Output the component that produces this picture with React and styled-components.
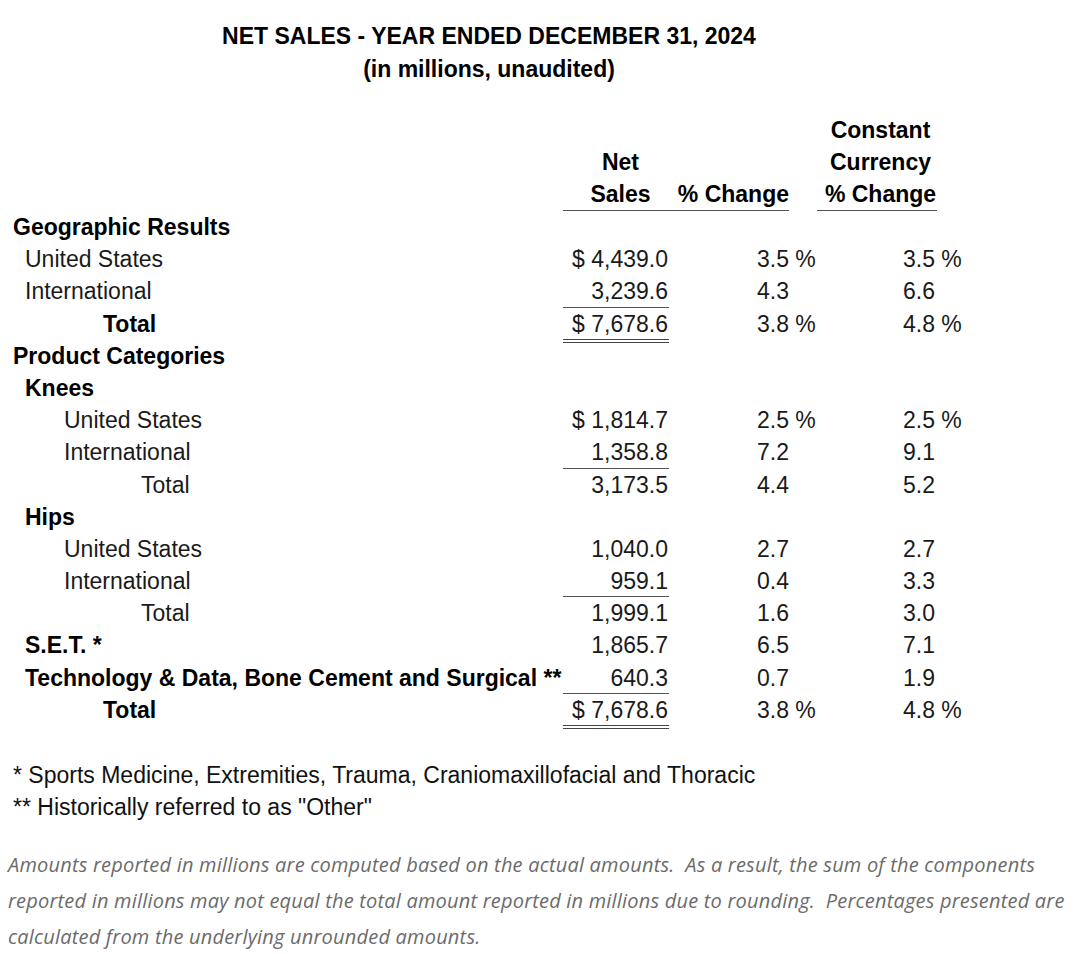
import styled, { createGlobalStyle } from "styled-components";

const GlobalStyle = createGlobalStyle`
  body {
    margin: 0;
    background: #fff;
    font-family: "Liberation Sans", Arial, sans-serif;
    color: #111;
  }
`;

// rows of the net sales table
const rows = [
  { label: "Geographic Results", indent: 0, bold: true },
  { label: "United States", indent: 12, net: "$ 4,439.0", pct: "3.5 %", cc: "3.5 %" },
  { label: "International", indent: 12, net: "3,239.6", pct: "4.3", cc: "6.6", rule: "single" },
  { label: "Total", indent: 90, bold: true, net: "$ 7,678.6", pct: "3.8 %", cc: "4.8 %", rule: "double" },
  { label: "Product Categories", indent: 0, bold: true },
  { label: "Knees", indent: 12, bold: true },
  { label: "United States", indent: 51, net: "$ 1,814.7", pct: "2.5 %", cc: "2.5 %" },
  { label: "International", indent: 51, net: "1,358.8", pct: "7.2", cc: "9.1", rule: "single" },
  { label: "Total", indent: 128, net: "3,173.5", pct: "4.4", cc: "5.2" },
  { label: "Hips", indent: 12, bold: true },
  { label: "United States", indent: 51, net: "1,040.0", pct: "2.7", cc: "2.7" },
  { label: "International", indent: 51, net: "959.1", pct: "0.4", cc: "3.3", rule: "single" },
  { label: "Total", indent: 128, net: "1,999.1", pct: "1.6", cc: "3.0" },
  { label: "S.E.T. *", indent: 12, bold: true, net: "1,865.7", pct: "6.5", cc: "7.1" },
  { label: "Technology & Data, Bone Cement and Surgical **", indent: 12, bold: true, net: "640.3", pct: "0.7", cc: "1.9", rule: "single" },
  { label: "Total", indent: 90, bold: true, net: "$ 7,678.6", pct: "3.8 %", cc: "4.8 %", rule: "double" },
];

const App = () => {
  return (
    <Page>
      <GlobalStyle />
      <Title>
        <div>NET SALES - YEAR ENDED DECEMBER 31, 2024</div>
        <div>(in millions, unaudited)</div>
      </Title>

      <Table>
        <HeadCell />
        <HeadCell $underline $pad="0 0 0 9px" $align="center">
          Net
          <br />
          Sales
        </HeadCell>
        <HeadCell $underline $align="right">
          % Change
        </HeadCell>
        <HeadCell />
        <HeadCell $underline $pad="0 0 0 7px" $align="center">
          Constant
          <br />
          Currency
          <br />
          % Change
        </HeadCell>

        {rows.map((r, i) => (
          <Row key={i}>
            <Label $indent={r.indent} $bold={r.bold}>
              {r.label}
            </Label>
            <Net $rule={r.rule}>{r.net}</Net>
            <Pct>{r.pct}</Pct>
            <Cc>{r.cc}</Cc>
          </Row>
        ))}
      </Table>

      <Footnotes>
        <div>* Sports Medicine, Extremities, Trauma, Craniomaxillofacial and Thoracic</div>
        <div>** Historically referred to as "Other"</div>
      </Footnotes>

      <Note>
        Amounts reported in millions are computed based on the actual amounts.{"\u00a0 "}As a
        result, the sum of the components reported in millions may not equal the total amount
        reported in millions due to rounding.{"\u00a0 "}Percentages presented are calculated from
        the underlying unrounded amounts.
      </Note>
    </Page>
  );
};

const Page = styled.div`
  width: 1080px;
  padding-top: 20px;
  font-size: 23px;
`;

const Title = styled.div`
  width: 978px;
  text-align: center;
  font-weight: bold;
  line-height: 33px;
  color: #000;
`;

const Table = styled.div`
  display: grid;
  grid-template-columns: 550px 106px 120px 28px 120px;
  padding-left: 13px;
  margin-top: 28px;
`;

const HeadCell = styled.div`
  align-self: end;
  font-weight: bold;
  line-height: 32px;
  text-align: ${(p) => p.$align || "left"};
  padding: ${(p) => p.$pad || "0"};
  border-bottom: 1px solid ${(p) => (p.$underline ? "#555" : "transparent")};
  color: #000;
  white-space: nowrap;
`;

const Row = styled.div`
  display: contents;
`;

const Cell = styled.div`
  box-sizing: border-box;
  height: 32.2px;
  line-height: 32px;
  white-space: nowrap;
`;

const Label = styled(Cell)`
  padding-left: ${(p) => p.$indent}px;
  font-weight: ${(p) => (p.$bold ? "bold" : "normal")};
  color: ${(p) => (p.$bold ? "#000" : "#1a1a1a")};
`;

const Net = styled(Cell)`
  position: relative;
  text-align: right;
  padding-right: 1px;
  color: #1a1a1a;
  border-bottom: 1px solid ${(p) => (p.$rule === "single" ? "#555" : "transparent")};

  &::after {
    content: "";
    display: ${(p) => (p.$rule === "double" ? "block" : "none")};
    position: absolute;
    left: 0;
    right: 0;
    bottom: -4px;
    height: 2px;
    border-top: 1px solid #444;
    border-bottom: 1px solid #444;
  }
`;

const Pct = styled(Cell)`
  grid-column: span 2;
  padding-left: 88px;
  color: #1a1a1a;
`;

const Cc = styled(Cell)`
  padding-left: 86px;
  color: #1a1a1a;
`;

const Footnotes = styled.div`
  margin-top: 33px;
  padding-left: 13px;
  line-height: 32px;
  color: #111;
`;

const Note = styled.p`
  margin: 24px 0 0;
  padding: 0 2px 0 8px;
  font-family: "Open Sans", sans-serif;
  font-style: italic;
  font-size: 20px;
  letter-spacing: 0.2px;
  line-height: 36px;
  color: #6b6b6b;
`;

export default App;
